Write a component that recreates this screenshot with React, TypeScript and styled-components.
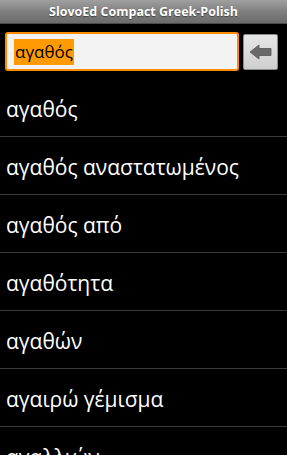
import styled, { createGlobalStyle } from "styled-components";

const GlobalStyle = createGlobalStyle`
  html, body {
    margin: 0;
    padding: 0;
    background: #000;
  }
  body {
    font-family: "Open Sans", "DejaVu Sans", sans-serif;
  }
`;

const Screen = styled.div`
  width: 287px;
  height: 455px;
  background: #000;
  overflow: hidden;
  position: relative;
  display: flex;
  flex-direction: column;
`;

const TitleBar = styled.div`
  height: 24px;
  flex: none;
  background: linear-gradient(#a0a0a0, #7c7c7c 55%, #6c6c6c);
  border-bottom: 1px solid #4a4a4a;
  box-sizing: border-box;
  display: flex;
  align-items: center;
  justify-content: center;
  color: #fff;
  font-weight: 700;
  font-size: 12.5px;
  text-shadow: 0 1px 1px rgba(0, 0, 0, 0.45);
`;

const SearchRow = styled.div`
  flex: none;
  display: flex;
  align-items: center;
  gap: 4px;
  padding: 8px 9px 8px 5px;
  height: 55px;
  box-sizing: border-box;
`;

const SearchField = styled.div`
  flex: 1;
  height: 39px;
  box-sizing: border-box;
  border: 2px solid #ff8c00;
  border-radius: 3px;
  background: #f3f3f3;
  display: flex;
  align-items: center;
  padding-left: 7px;
`;

const Selected = styled.span`
  background: #ff9a00;
  color: #000;
  font-size: 17px;
  line-height: 26px;
  padding: 0 1px;
`;

const BackButton = styled.div`
  width: 35px;
  height: 36px;
  flex: none;
  box-sizing: border-box;
  border: 1px solid #8c8c8c;
  border-radius: 2px;
  background: linear-gradient(#e6e6e6, #cfcfcf);
  display: flex;
  align-items: center;
  justify-content: center;
`;

const List = styled.div`
  flex: 1;
  position: relative;
`;

const Row = styled.div`
  height: 58px;
  box-sizing: border-box;
  border-bottom: 1px solid #3a3a3a;
  display: flex;
  align-items: center;
  padding-left: 6px;
  padding-top: 3px;
  color: #fff;
  font-size: 21px;
  white-space: nowrap;
`;

const Fade = styled.div`
  position: absolute;
  left: 0;
  right: 0;
  bottom: 0;
  height: 28px;
  background: linear-gradient(rgba(0, 0, 0, 0), rgba(0, 0, 0, 0.85));
  pointer-events: none;
`;

const words = [
  "αγαθός",
  "αγαθός αναστατωμένος",
  "αγαθός από",
  "αγαθότητα",
  "αγαθών",
  "αγαιρώ γέμισμα",
  "αγαλλιών",
];

export default function App() {
  return (
    <>
      <GlobalStyle />
      <Screen>
        <TitleBar>SlovoEd Compact Greek-Polish</TitleBar>
        <SearchRow>
          <SearchField>
            <Selected>αγαθός</Selected>
          </SearchField>
          <BackButton>
            <svg width="24" height="16" viewBox="0 0 24 16">
              <path
                d="M1 8 L10 1 L10 4.5 L22 4.5 L22 11.5 L10 11.5 L10 15 Z"
                fill="#6a6a6a"
                stroke="#555"
                strokeWidth="0.8"
                strokeLinejoin="round"
              />
            </svg>
          </BackButton>
        </SearchRow>
        <List>
          {words.map((w) => (
            <Row key={w}>{w}</Row>
          ))}
          <Fade />
        </List>
      </Screen>
    </>
  );
}
